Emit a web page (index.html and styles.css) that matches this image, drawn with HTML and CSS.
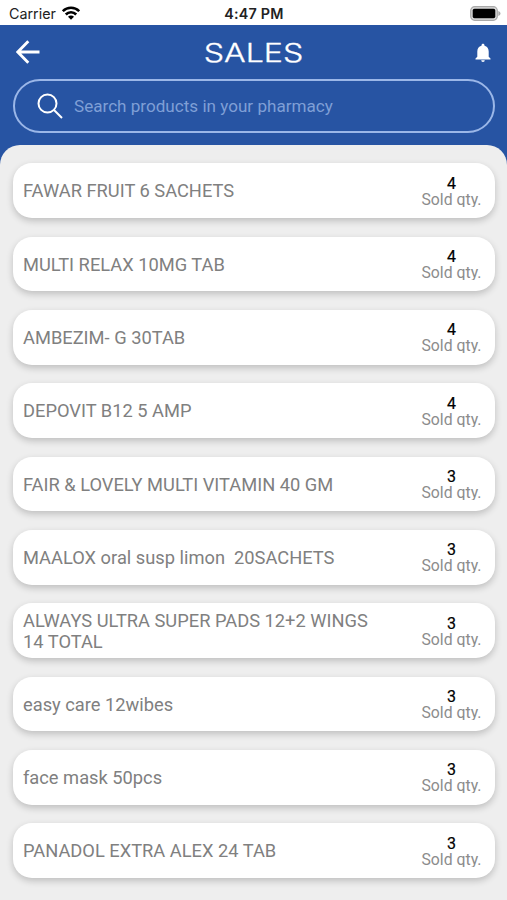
FILE: index.html
```
<!DOCTYPE html>
<html lang="en">
<head>
  <meta charset="UTF-8">
  <meta name="viewport" content="width=device-width, initial-scale=1.0">
  <title>Sales</title>
  <link rel="stylesheet" href="styles.css">
</head>
<body>
  <!-- Status bar -->
  <div class="status-bar">
    <div class="carrier">
      <span>Carrier</span>
      <svg class="wifi" width="18" height="14" viewBox="0 0 18 14" fill="none" stroke="#000" stroke-width="2.6">
        <path d="M.8 5.200a11.500 11.500 0 0 1 16.400 0"/>
        <path d="M3.800 8.500a7.200 7.200 0 0 1 10.400 0"/>
        <path d="M9 13.800L6 10.800a4.200 4.200 0 0 1 6 0z" fill="#000" stroke="none"/>
      </svg>
    </div>
    <span class="time">4:47 PM</span>
    <svg class="battery" width="31" height="15" viewBox="0 0 31 15">
      <rect x="0.7" y="0.7" width="26.6" height="13.6" rx="4" fill="#d8d8d8" stroke="#a9a9a9" stroke-width="1.2"/>
      <rect x="2.7" y="2.7" width="22.6" height="9.6" rx="1.8" fill="#000"/>
      <path d="M28.3 5v5c1.3-.4 2.2-1.3 2.2-2.5S29.600 5.400 28.300 5z" fill="#a9a9a9"/>
    </svg>
  </div>

  <!-- Header -->
  <div class="header">
    <div class="title-row">
      <svg class="back" width="24" height="24" viewBox="0 0 24 24" fill="none" stroke="#fff" stroke-width="2.8">
        <path d="M12.300 1.200L1.800 12l10.500 10.800M2 12h21.500"/>
      </svg>
      <h1 class="title">SALES</h1>
      <svg class="bell" width="16" height="20" viewBox="0 0 16 20" fill="#fff">
        <path d="M8 .8c-.9 0-1.500.7-1.500 1.500v.5C3.800 3.500 2.300 5.700 2.300 8.500v5.200L.5 15.500v.9h15v-.9l-1.800-1.800V8.500c0-2.800-1.500-5-4.200-5.700v-.5C9.500 1.500 8.900.8 8 .8zM6.200 17.300a1.800 1.800 0 0 0 3.600 0z"/>
      </svg>
    </div>
    <div class="search-box">
      <svg width="26" height="26" viewBox="0 0 26 26" fill="none" stroke="#fff" stroke-width="2">
        <circle cx="10.500" cy="10.500" r="9"/>
        <path d="M17 17l8 8"/>
      </svg>
      <input type="text" class="search-input" placeholder="Search products in your pharmacy">
    </div>
  </div>

  <!-- Product list -->
  <div class="list">
    <div class="card">
      <div class="name">FAWAR FRUIT 6 SACHETS</div>
      <div class="qty"><div class="count">4</div><div class="label">Sold qty.</div></div>
    </div>
    <div class="card">
      <div class="name">MULTI RELAX 10MG TAB</div>
      <div class="qty"><div class="count">4</div><div class="label">Sold qty.</div></div>
    </div>
    <div class="card">
      <div class="name">AMBEZIM- G 30TAB</div>
      <div class="qty"><div class="count">4</div><div class="label">Sold qty.</div></div>
    </div>
    <div class="card">
      <div class="name">DEPOVIT B12 5 AMP</div>
      <div class="qty"><div class="count">4</div><div class="label">Sold qty.</div></div>
    </div>
    <div class="card">
      <div class="name">FAIR &amp; LOVELY MULTI VITAMIN 40 GM</div>
      <div class="qty"><div class="count">3</div><div class="label">Sold qty.</div></div>
    </div>
    <div class="card">
      <div class="name">MAALOX oral susp limon  20SACHETS</div>
      <div class="qty"><div class="count">3</div><div class="label">Sold qty.</div></div>
    </div>
    <div class="card">
      <div class="name">ALWAYS ULTRA SUPER PADS 12+2 WINGS 14 TOTAL</div>
      <div class="qty"><div class="count">3</div><div class="label">Sold qty.</div></div>
    </div>
    <div class="card">
      <div class="name">easy care 12wibes</div>
      <div class="qty"><div class="count">3</div><div class="label">Sold qty.</div></div>
    </div>
    <div class="card">
      <div class="name">face mask 50pcs</div>
      <div class="qty"><div class="count">3</div><div class="label">Sold qty.</div></div>
    </div>
    <div class="card">
      <div class="name">PANADOL EXTRA ALEX 24 TAB</div>
      <div class="qty"><div class="count">3</div><div class="label">Sold qty.</div></div>
    </div>
  </div>
</body>
</html>
```
FILE: styles.css
```
* {
  box-sizing: border-box;
}

body {
  margin: 0;
  height: 900px;
  overflow: hidden;
  font-family: Roboto, sans-serif;
  background-color: #2754a3;
}

/* Status bar */
.status-bar {
  display: grid;
  grid-template-columns: 1fr auto 1fr;
  align-items: center;
  height: 25px;
  padding: 2px 6px 0 9px;
  background-color: #fff;
  font-family: Inter, sans-serif;
  font-size: 14.3px;
  color: #222;
}

.carrier {
  display: flex;
  align-items: center;
  gap: 6px;
}

.wifi {
  margin-top: -2px;
}

.time {
  margin-left: -2px;
  font-weight: 600;
  letter-spacing: 0.2px;
}

.battery {
  justify-self: end;
  margin-top: -1px;
}

/* Header */
.header {
  height: 120px;
  padding: 0 12px 0 13px;
}

.title-row {
  display: grid;
  grid-template-columns: 1fr auto 1fr;
  align-items: center;
  height: 54px;
  padding: 1px 4px 0 3px;
}

.back {
  margin-top: -2px;
}

.title {
  margin: 0;
  font-family: Inter, sans-serif;
  font-size: 25.5px;
  font-weight: 300;
  line-height: 54px;
  color: #fff;
  transform: scaleX(1.26);
  -webkit-text-stroke: 0.3px #fff;
}

.bell {
  justify-self: end;
}

.search-box {
  display: flex;
  align-items: center;
  gap: 11px;
  height: 54px;
  padding-left: 22px;
  border: 2px solid #9bb7e8;
  border-radius: 27px;
}

.search-input {
  flex: 1;
  padding: 0;
  border: none;
  outline: none;
  background: none;
  font-family: Roboto, sans-serif;
  font-size: 17.1px;
  color: #fff;
}

.search-input::placeholder {
  color: #7f9fd6;
}

/* Product list */
.list {
  display: flex;
  flex-direction: column;
  gap: 18.5px;
  height: 755px;
  padding: 18.3px 12px 0 13px;
  border-radius: 20px 20px 0 0;
  background-color: #eee;
}

.card {
  display: flex;
  flex-shrink: 0;
  align-items: center;
  justify-content: space-between;
  height: 54.83px;
  padding: 0 13px 0 10px;
  border-radius: 19px;
  background-color: #fff;
  box-shadow: 0 3px 7px rgba(0, 0, 0, 0.2);
}

.name {
  width: 355px;
  font-size: 18.3px;
  line-height: 21px;
  color: #808080;
  white-space: pre-wrap;
}

.qty {
  width: 61px;
  text-align: center;
}

.count {
  padding-top: 1px;
  font-size: 16px;
  line-height: 16px;
  color: #000;
  -webkit-text-stroke: 0.2px #000;
}

.label {
  height: 15px;
  overflow: hidden;
  font-size: 15.8px;
  line-height: 15.5px;
  color: #8c8c8c;
  white-space: nowrap;
}
```
